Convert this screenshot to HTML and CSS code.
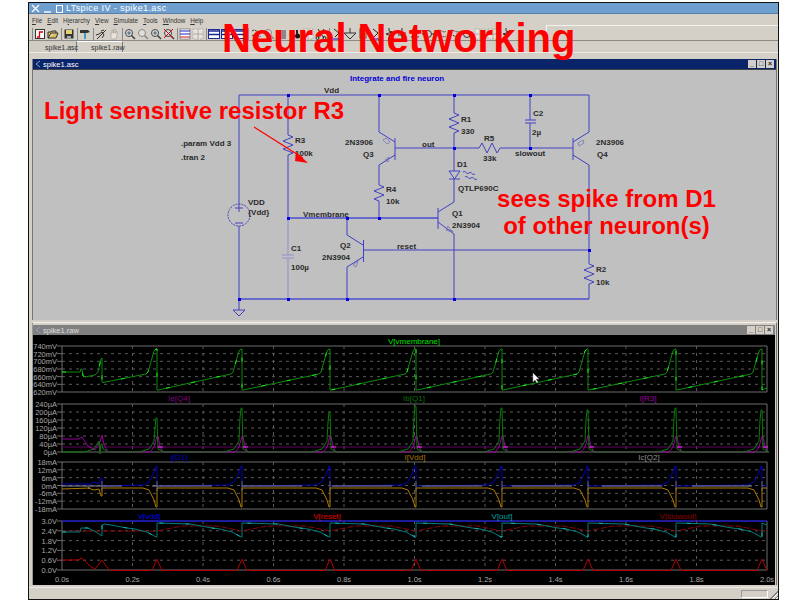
FILE: index.html
```html
<!DOCTYPE html>
<html lang="en">
<head>
    <meta charset="UTF-8">
    <title>LTspice IV - spike1.asc</title>
    <link rel="stylesheet" href="styles.css">
</head>
<body>
    <svg class="sprites" width="0" height="0">
        <symbol id="i-new" viewBox="0 0 12 12"><rect x="1.5" y="1.5" width="9" height="9" fill="#fff" stroke="#333"/><path d="M3 9h2.5V4H9" fill="none" stroke="#e00000" stroke-width="1.3"/></symbol>
        <symbol id="i-open" viewBox="0 0 12 12"><path d="M1 10V4h3l1-1h4v2H4l-3 5h8l2-5H9" fill="#e0c050" stroke="#333"/></symbol>
        <symbol id="i-save" viewBox="0 0 12 12"><rect x="1.5" y="1.5" width="9" height="9" fill="#333"/><rect x="3" y="2" width="6" height="4" fill="#e8d070"/><rect x="4" y="8" width="4" height="2.5" fill="#aaa"/></symbol>
        <symbol id="i-hammer" viewBox="0 0 12 12"><path d="M1 2h8l2 2-3 1H1z" fill="#333"/><path d="M5 5h2v6H5z" fill="#3aa0c0"/></symbol>
        <symbol id="i-run" viewBox="0 0 12 12"><path d="M6 3l3-1M4 6l3-2 2 3-2 3M1 7l3-1M7 6l4-4M2 11l5-5" fill="none" stroke="#333"/></symbol>
        <symbol id="i-halt" viewBox="0 0 12 12"><path d="M3 11V5h1V2h1v3h1V1h1v4h1V3h1v5l-1 3z" fill="#e8e4dc" stroke="#a8a49c" stroke-width=".7"/></symbol>
        <symbol id="i-zoom" viewBox="0 0 12 12"><circle cx="5" cy="5" r="3.5" fill="#cfe0e8" stroke="#444"/><path d="M7.5 7.5l3.5 3.5" stroke="#444" stroke-width="1.6"/><path d="M3 5h4M5 3v4" stroke="#333" stroke-width=".7"/></symbol>
        <symbol id="i-zoomg" viewBox="0 0 12 12"><circle cx="5" cy="5" r="3.5" fill="#e0e0d8" stroke="#888"/><path d="M7.5 7.5l3.5 3.5" stroke="#888" stroke-width="1.6"/></symbol>
        <symbol id="i-zoomx" viewBox="0 0 12 12"><circle cx="5" cy="5" r="3.5" fill="#cfe0e8" stroke="#444"/><path d="M7.5 7.5l3.5 3.5" stroke="#444" stroke-width="1.6"/><path d="M1 1l9 9M10 1l-9 9" stroke="#d00000"/></symbol>
        <symbol id="i-plot" viewBox="0 0 12 12"><rect x="1" y="1" width="10" height="10" fill="#fff" stroke="#555" stroke-width=".6"/><path d="M1 3h10M1 6h10" stroke="#2020c0"/><path d="M1 9h10" stroke="#c02020"/></symbol>
        <symbol id="i-plotg" viewBox="0 0 12 12"><rect x="1" y="1" width="10" height="10" fill="#e8e4dc" stroke="#999" stroke-width=".6" stroke-dasharray="2 1"/><path d="M1 6h10M6 1v10" stroke="#aaa"/></symbol>
        <symbol id="i-win" viewBox="0 0 12 12"><rect x=".5" y="1.5" width="11" height="9" fill="#fff" stroke="#1a2a90"/><path d="M.5 3h11M.5 6.5h11" stroke="#1a2a90" stroke-width="1.3"/></symbol>
        <symbol id="i-cut" viewBox="0 0 12 12"><path d="M3 1l6 9M9 1l-6 9" stroke="#222"/><circle cx="2.5" cy="10" r="1.5" fill="none" stroke="#222"/><circle cx="9.5" cy="10" r="1.5" fill="none" stroke="#222"/></symbol>
        <symbol id="i-gray" viewBox="0 0 12 12"><rect x="2" y="2" width="8" height="9" fill="#888"/></symbol>
        <symbol id="i-bin" viewBox="0 0 12 12"><circle cx="3.5" cy="8" r="2.5" fill="#111"/><circle cx="8.5" cy="8" r="2.5" fill="#111"/><path d="M3 2h2v5H3zM7 2h2v5H7z" fill="#222"/></symbol>
        <symbol id="i-wire" viewBox="0 0 12 12"><path d="M3 1l5 4-4 4" fill="none" stroke="#222"/><path d="M0 11h12" stroke="#1010d0"/></symbol>
        <symbol id="i-gnd" viewBox="0 0 12 12"><path d="M6 0v5M0 5h12L6 11z" fill="none" stroke="#333"/></symbol>
        <symbol id="i-label" viewBox="0 0 12 12"><rect x="3" y="1" width="6" height="9" fill="#d8b840" stroke="#555"/></symbol>
        <symbol id="i-res" viewBox="0 0 12 12"><path d="M6 0v3l3 1-6 2 6 2-3 1v3" fill="none" stroke="#333"/></symbol>
        <symbol id="i-cap" viewBox="0 0 12 12"><path d="M6 0v5M2 5h8M2 7h8M6 7v5" fill="none" stroke="#333"/></symbol>
        <symbol id="i-dio" viewBox="0 0 12 12"><path d="M2 3h8L6 9zM2 9h8M6 0v12" fill="none" stroke="#333"/></symbol>
        <symbol id="i-text" viewBox="0 0 12 12"><circle cx="6" cy="6" r="3.5" fill="none" stroke="#333"/><path d="M0 6h2M10 6h2" stroke="#333"/></symbol>
        <symbol id="i-move" viewBox="0 0 12 12"><path d="M2 3c3-3 6 3 9 0M2 8c3-3 6 3 9 0" fill="none" stroke="#333" stroke-dasharray="2 1"/></symbol>
        <symbol id="i-doc" viewBox="0 0 8 8"><path d="M6 1L2 4l4 3" fill="none" stroke="#8a9ac8"/></symbol>
    </svg>

    <div class="app">
        <div class="titlebar">
            <div class="wm-buttons">
                <svg width="9" height="9" viewBox="0 0 9 9"><path d="M1 1l7 7M8 1L1 8" stroke="#fff" stroke-width="1.2"/></svg>
                <svg width="9" height="9" viewBox="0 0 9 9"><path d="M1 8h7" stroke="#fff" stroke-width="1.4"/></svg>
                <svg width="9" height="9" viewBox="0 0 9 9"><rect x="1.5" y="1.5" width="6" height="7" fill="none" stroke="#fff"/></svg>
            </div>
            <span class="app-title">LTspice IV - spike1.asc</span>
        </div>

        <div class="menubar">
            <span><u>F</u>ile</span>
            <span><u>E</u>dit</span>
            <span>H<u>i</u>erarchy</span>
            <span><u>V</u>iew</span>
            <span><u>S</u>imulate</span>
            <span><u>T</u>ools</span>
            <span><u>W</u>indow</span>
            <span><u>H</u>elp</span>
        </div>

        <div class="toolbar">
            <i class="sep"></i>
            <svg class="tb-icon"><use href="#i-new"/></svg>
            <svg class="tb-icon"><use href="#i-open"/></svg>
            <i class="sep"></i>
            <svg class="tb-icon"><use href="#i-save"/></svg>
            <i class="sep"></i>
            <svg class="tb-icon"><use href="#i-hammer"/></svg>
            <i class="sep"></i>
            <svg class="tb-icon"><use href="#i-run"/></svg>
            <svg class="tb-icon"><use href="#i-halt"/></svg>
            <i class="sep"></i>
            <svg class="tb-icon"><use href="#i-zoom"/></svg>
            <svg class="tb-icon"><use href="#i-zoomg"/></svg>
            <svg class="tb-icon"><use href="#i-zoom"/></svg>
            <svg class="tb-icon"><use href="#i-zoomx"/></svg>
            <i class="sep"></i>
            <svg class="tb-icon"><use href="#i-plot"/></svg>
            <svg class="tb-icon"><use href="#i-plotg"/></svg>
            <i class="sep"></i>
            <svg class="tb-icon"><use href="#i-win"/></svg>
            <svg class="tb-icon"><use href="#i-win"/></svg>
            <svg class="tb-icon"><use href="#i-win"/></svg>
            <i class="sep"></i>
            <svg class="tb-icon"><use href="#i-move"/></svg>
            <svg class="tb-icon"><use href="#i-zoomg"/></svg>
            <svg class="tb-icon"><use href="#i-gray"/></svg>
            <svg class="tb-icon"><use href="#i-bin"/></svg>
            <svg class="tb-icon"><use href="#i-plotg"/></svg>
            <svg class="tb-icon"><use href="#i-cut"/></svg>
            <i class="sep"></i>
            <svg class="tb-icon"><use href="#i-wire"/></svg>
            <svg class="tb-icon"><use href="#i-gnd"/></svg>
            <svg class="tb-icon"><use href="#i-label"/></svg>
            <svg class="tb-icon"><use href="#i-wire"/></svg>
            <svg class="tb-icon"><use href="#i-res"/></svg>
            <svg class="tb-icon"><use href="#i-cap"/></svg>
            <svg class="tb-icon"><use href="#i-dio"/></svg>
            <svg class="tb-icon"><use href="#i-text"/></svg>
            <svg class="tb-icon"><use href="#i-move"/></svg>
            <svg class="tb-icon"><use href="#i-move"/></svg>
            <svg class="tb-icon"><use href="#i-text"/></svg>
            <svg class="tb-icon"><use href="#i-plotg"/></svg>
            <svg class="tb-icon"><use href="#i-plotg"/></svg>
            <svg class="tb-icon"><use href="#i-res"/></svg>
            <i class="tb-rest"></i>
        </div>

        <div class="tabs">
            <span class="tab tab-active">spike1.asc</span>
            <span class="tab">spike1.raw</span>
        </div>

        <div class="mdi">
            <div class="child">
                <div class="child-title active">
                    <svg class="child-icon"><use href="#i-doc"/></svg>
                    <span class="child-name">spike1.asc</span>
                    <div class="child-buttons"><b>_</b><b>□</b><b>×</b></div>
                </div>
                <!-- viewBox uses screen coordinates so the wires are easy to read off -->
                <svg class="schematic" viewBox="33 70 743 250">
                    <g class="wire">
                        <path d="M239 95H589M239 95V204M239 226V310M233 310H245L239 316Z"/>
                        <path d="M288 95V135l5 2-10 4 10 4-10 4 10 4-5 2V218"/>
                        <path class="pale" d="M288 218V255M282 255H294M282 258H294M288 258V299"/>
                        <path d="M379 95V132L395 142M395 138V160M395 155L379 165V185l5 2-10 4 10 4-10 4 5 2V218"/>
                        <path d="M395 148H479l3-5 5 10 5-10 5 10 3-5H573M573 138V160"/>
                        <path d="M454 95V113l5 2-10 4 10 4-10 4 10 4-5 2V171M449 171H460L454.5 179ZM449 179H460M454 179V202L438 212M438 208V229M438 222L454 234V299"/>
                        <path d="M530 95V120M525 120H536M525 123H536M530 123V148"/>
                        <path d="M589 95V132L573 142M573 155L589 165V264l5 2-10 4 10 4-10 4 10 4-5 2V299"/>
                        <path d="M347 218V235L363 245M363.5 240V262M363 257L347 267V299M363 250H589"/>
                        <path d="M463 172c3-2 3 3 6 1s3 3 6 1M465 177c3-2 3 3 6 1s3 3 6 1"/>
                        <path class="thin" d="M390 142l-4-4-3 2 4 4zM389 157l-4 3 3 2zM448 226l4 6-6-2zM358 261l-5 4 3 2zM578 143l5-3 1 3-5 3zM449 230l4 1-1 2z"/>
                        <path class="heavy" d="M288 218H438M239 299H589"/>
                        <circle class="source" cx="239" cy="215" r="11"/>
                        <path d="M235 208h8M239 204v8M235 223h8"/>
                    </g>
                    <g class="dots">
                        <rect x="287" y="94" width="3" height="3"/><rect x="378" y="94" width="3" height="3"/>
                        <rect x="453" y="94" width="3" height="3"/><rect x="529" y="94" width="3" height="3"/>
                        <rect x="287" y="217" width="3" height="3"/><rect x="346" y="217" width="3" height="3"/>
                        <rect x="378" y="217" width="3" height="3"/><rect x="453" y="147" width="3" height="3"/>
                        <rect x="529" y="147" width="3" height="3"/><rect x="588" y="249" width="3" height="3"/>
                        <rect x="238" y="298" width="3" height="3"/>
                        <rect x="287" y="298" width="3" height="3"/><rect x="346" y="298" width="3" height="3"/>
                        <rect x="453" y="298" width="3" height="3"/>
                    </g>
                    <text class="heading" x="350" y="81">Integrate and fire neuron</text>
                    <g class="label">
                        <text x="324" y="93">Vdd</text>
                        <text x="181" y="146">.param Vdd 3</text>
                        <text x="181" y="160">.tran 2</text>
                        <text x="295" y="143">R3</text>
                        <text x="295" y="156">100k</text>
                        <text x="345" y="145">2N3906</text>
                        <text x="363" y="157">Q3</text>
                        <text x="386" y="192">R4</text>
                        <text x="386" y="204">10k</text>
                        <text x="248" y="205">VDD</text>
                        <text x="248" y="215">{Vdd}</text>
                        <text x="303" y="217">Vmembrane</text>
                        <text x="291" y="251">C1</text>
                        <text x="291" y="270">100µ</text>
                        <text x="340" y="248">Q2</text>
                        <text x="322" y="260">2N3904</text>
                        <text x="397" y="249">reset</text>
                        <text x="422" y="147">out</text>
                        <text x="461" y="122">R1</text>
                        <text x="461" y="134">330</text>
                        <text x="484" y="141">R5</text>
                        <text x="483" y="161">33k</text>
                        <text x="457" y="167">D1</text>
                        <text x="458" y="191">QTLP690C</text>
                        <text x="452" y="216">Q1</text>
                        <text x="452" y="228">2N3904</text>
                        <text x="533" y="116">C2</text>
                        <text x="532" y="135">2µ</text>
                        <text x="515" y="156">slowout</text>
                        <text x="596" y="145">2N3906</text>
                        <text x="597" y="157">Q4</text>
                        <text x="596" y="272">R2</text>
                        <text x="596" y="285">10k</text>
                    </g>
                    <path class="pointer" d="M254 127L303 158"/>
                    <path class="pointer-head" d="M296 152L308 163L295 161Z"/>
                </svg>
            </div>

            <div class="child child-wave">
                <div class="child-title">
                    <svg class="child-icon"><use href="#i-doc"/></svg>
                    <span class="child-name">spike1.raw</span>
                    <div class="child-buttons"><b>_</b><b>□</b><b>×</b></div>
                </div>
                <svg id="chart" class="chart" viewBox="33 335 742 250"></svg>
            </div>
        </div>

        <div class="statusbar">
            <span class="status-panel"></span>
            <span class="grip"></span>
        </div>
    </div>

    <div class="note note-title">Neural Networking</div>
    <div class="note note-r3">Light sensitive resistor R3</div>
    <div class="note note-spike">sees spike from D1<br>of other neuron(s)</div>

    <script src="chart.js"></script>
</body>
</html>
```

FILE: styles.css
```css
/* styles.css */

* {
    box-sizing: border-box;
}

body {
    margin: 0;
    height: 600px;
    overflow: hidden;
    background-color: #fff;
    font-family: "Liberation Sans", Arial, sans-serif;
}

.sprites {
    display: block;
    height: 0;
}

.app {
    display: flex;
    flex-direction: column;
    width: 751px;
    height: 598px;
    margin: 2px 0 0 28px;
    border: 1px solid #111;
    background-color: #d4d0c8;
}

.titlebar {
    flex: none;
    display: flex;
    align-items: center;
    height: 11px;
    padding-left: 2px;
    background-color: #6f9fcf;
    border-bottom: 1px solid #5a80a8;
    color: #fff;
}

.wm-buttons {
    display: flex;
    gap: 3px;
    margin-right: 2px;
}

.app-title {
    font-size: 9px;
    letter-spacing: 0.4px;
    line-height: 10px;
}

.menubar {
    flex: none;
    display: flex;
    align-items: center;
    gap: 5px;
    height: 11px;
    padding: 1px 0 0 3px;
    font-size: 6.3px;
    color: #333;
}

.toolbar {
    flex: none;
    display: flex;
    align-items: center;
    gap: 1px;
    height: 16px;
    padding: 2px 0 0 2px;
    border-bottom: 1px solid #8a8a86;
}

.tb-icon {
    flex: none;
    width: 12px;
    height: 12px;
}

.sep {
    flex: none;
    width: 1px;
    height: 12px;
    margin-left: 1px;
    background-color: #888;
}

.tb-rest {
    align-self: stretch;
    width: 232px;
    margin: -2px 0 0 auto;
    border-top: 1px solid #f4f2ee;
    border-left: 1px solid #f4f2ee;
}

.tabs {
    flex: none;
    display: flex;
    height: 12px;
    padding-left: 1px;
    border-bottom: 1px solid #eeeae4;
    font-size: 7px;
    color: #333;
}

.tab {
    display: flex;
    align-items: center;
    width: 46px;
    padding-left: 14px;
    border-top: 1px solid #fff;
    border-right: 1px solid #777;
}

.tab-active {
    width: 47px;
    padding-left: 15px;
    border-top-color: transparent;
    background-color: #d0ccc4;
}

.mdi {
    flex: none;
    display: flex;
    flex-direction: column;
    height: 535px;
    padding: 6px 1px 2px 3px;
    border-bottom: 1px solid #eeeae4;
}

.child {
    flex: none;
    display: flex;
    flex-direction: column;
    height: 261px;
    border-left: 1px solid #777;
    border-right: 1px solid #777;
}

.child-wave {
    height: 263px;
    margin-top: 2px;
    padding: 2px 1px 0 0;
    border-top: 1px solid #f4f2ee;
    border-left: 1px solid #999;
}

.child-title {
    flex: none;
    display: flex;
    align-items: center;
    height: 10px;
    padding: 0 2px 0 1px;
    background-color: #808080;
    color: #ddd;
    font-size: 7.5px;
}

.child-title.active {
    height: 11px;
    background-color: #0a246a;
    color: #fff;
    border-bottom: 1px solid #444;
}

.child-icon {
    flex: none;
    width: 8px;
    height: 8px;
    margin-right: 1px;
}

.child-name {
    flex: 1;
    line-height: 9px;
}

.child-buttons {
    display: flex;
    gap: 1px;
}

.child-buttons b {
    display: flex;
    justify-content: center;
    align-items: center;
    width: 8px;
    height: 8px;
    background-color: #d4d0c8;
    color: #222;
    font-size: 7px;
    line-height: 8px;
    font-weight: bold;
}

.schematic {
    display: block;
    flex: none;
    width: 743px;
    height: 250px;
    background-color: #c0c0c0;
}

.chart {
    display: block;
    flex: none;
    width: 742px;
    height: 250px;
    background-color: #000;
}

.statusbar {
    flex: none;
    display: flex;
    justify-content: flex-end;
    align-items: center;
    height: 11px;
}

.status-panel {
    width: 27px;
    height: 8px;
    margin-right: 1px;
    border: 1px solid #9a9a96;
    border-right-color: #fff;
    border-bottom-color: #fff;
}

.grip {
    align-self: flex-end;
    width: 9px;
    height: 9px;
    background: repeating-linear-gradient(135deg, #d4d0c8 0 1px, #808080 1px 2px, #fff 2px 3px);
    clip-path: polygon(100% 0, 100% 100%, 0 100%);
}

/* schematic */

.wire path,
.wire circle {
    fill: none;
    stroke: #4040c4;
    stroke-width: 1;
}

.wire .pale {
    stroke: #8c90c8;
}

.wire .thin {
    stroke: #6a6ab4;
    stroke-width: 0.7;
}

.wire .heavy {
    stroke: #1414d8;
    stroke-width: 1.2;
}

.wire .source {
    stroke-dasharray: 2 1;
}

.dots rect {
    fill: #0000e0;
}

.heading {
    fill: #0000d8;
    font-size: 8px;
    font-weight: bold;
}

.label text {
    fill: #2a2a2a;
    font-size: 8px;
    font-weight: bold;
}

.pointer {
    fill: none;
    stroke: #ff0000;
    stroke-width: 1.2;
}

.pointer-head {
    fill: #ff0000;
}

/* waveform plots */

.frame {
    stroke: #6c6c6c;
    stroke-width: 1;
}

.grid {
    stroke: #5a5a5a;
    stroke-width: 1;
    stroke-dasharray: 3 4;
}

.axis-text {
    fill: #a8a8a8;
    font-size: 7.5px;
}

.trace-name {
    font-size: 8px;
    text-anchor: middle;
}

.trace {
    fill: none;
    stroke-width: 1;
}

.cursor {
    fill: #fff;
    stroke: #888;
    stroke-width: 0.5;
}

/* red text laid over the screenshot */

.note {
    position: absolute;
    color: #ff0000;
    font-weight: bold;
    white-space: nowrap;
}

.note-title {
    left: 222px;
    top: 15px;
    font-size: 40px;
    line-height: 46px;
}

.note-r3 {
    left: 44px;
    top: 97px;
    font-size: 24px;
    line-height: 28px;
}

.note-spike {
    left: 497px;
    top: 185px;
    width: 219px;
    font-size: 24px;
    line-height: 27px;
    text-align: center;
}
```

FILE: chart.js
```js
// chart.js - draws the four LTspice plots into #chart

const svg = document.getElementById("chart");
const NS = "http://www.w3.org/2000/svg";

const LEFT = 62;
const RIGHT = 767;

// Where each neuron spike fires, in screen x
const spikes = [102, 157, 242, 330, 416, 502, 588, 676, 762];

const plots = [
    { top: 346, bottom: 392, ticks: ["740mV", "720mV", "700mV", "680mV", "660mV", "640mV", "620mV"] },
    { top: 404, bottom: 452, ticks: ["240µA", "200µA", "160µA", "120µA", "80µA", "40µA", "0µA"] },
    { top: 462, bottom: 509, ticks: ["18mA", "12mA", "6mA", "0mA", "-6mA", "-12mA", "-18mA"] },
    { top: 521, bottom: 570, ticks: ["3.0V", "2.4V", "1.8V", "1.2V", "0.6V", "0.0V"] }
];

const names = [
    { text: "V[vmembrane]", x: 414, y: 344, color: "#00e000" },
    { text: "Ie[Q4]", x: 179, y: 401, color: "#800080" },
    { text: "Ib[Q1]", x: 414, y: 401, color: "#087008" },
    { text: "I[R3]", x: 648, y: 401, color: "#a000a0" },
    { text: "I[D1]", x: 179, y: 460, color: "#0000c8" },
    { text: "I[Vdd]", x: 415, y: 460, color: "#a87800" },
    { text: "Ic[Q2]", x: 649, y: 460, color: "#909090" },
    { text: "V[vdd]", x: 149, y: 519, color: "#0000ff" },
    { text: "V[reset]", x: 327, y: 519, color: "#e00000" },
    { text: "V[out]", x: 502, y: 519, color: "#00a0a0" },
    { text: "V[slowout]", x: 678, y: 519, color: "#900000" }
];

function add(tag, attrs, text) {
    const el = document.createElementNS(NS, tag);
    for (const key in attrs) el.setAttribute(key, attrs[key]);
    if (text) el.textContent = text;
    svg.appendChild(el);
    return el;
}

function line(x1, y1, x2, y2, cls) {
    return add("line", { x1, y1, x2, y2, class: cls });
}

function trace(points, color, extra) {
    add("polyline", Object.assign({
        class: "trace",
        points: points.map(p => p.join(",")).join(" "),
        stroke: color
    }, extra));
}

function drawGrid() {
    plots.forEach(plot => {
        const step = (plot.bottom - plot.top) / (plot.ticks.length - 1);
        plot.ticks.forEach((label, i) => {
            const y = plot.top + i * step;
            if (i > 0 && i < plot.ticks.length - 1) line(LEFT, y, RIGHT, y, "grid");
            line(LEFT - 5, y, LEFT, y, "frame");
            add("text", { class: "axis-text", x: 57, y: y + 3, "text-anchor": "end" }, label);
        });
        line(LEFT, plot.top, RIGHT, plot.top, "frame");
        line(LEFT, plot.bottom, RIGHT, plot.bottom, "frame");
        line(LEFT, plot.top, LEFT, plot.bottom, "frame");
        line(RIGHT, plot.top, RIGHT, plot.bottom, "frame");
        for (let i = 1; i < 10; i++) {
            const x = LEFT + i * 70.5;
            line(x, plot.top, x, plot.bottom, "grid");
        }
    });
    for (let i = 0; i <= 10; i++) {
        const x = LEFT + i * 70.5;
        add("text", { class: "axis-text", x, y: 582, "text-anchor": "middle" }, (i * 0.2).toFixed(1) + "s");
    }
}

// The scaled-down screenshot shows traces dim with bright stretches
function glowing(points, dim, bright) {
    trace(points, dim);
    trace(points, bright, { "stroke-dasharray": "4 22" });
}

function drawMembrane() {
    const pts = [[LEFT, 372], [80, 372], [81, 369], [82, 369], [83, 376], [85, 377], [95, 375], [98, 372], [101, 359], [102, 358], [102, 382]];
    spikes.slice(1).forEach((t, i) => {
        pts.push([spikes[i] + 1, i === 0 ? 382.5 : 390], [t - 11, 374], [t - 9, 372], [t - 3, 351], [t - 1, 349], [t, 349], [t, 390]);
    });
    pts.push([RIGHT, 388]);
    glowing(pts, "#0a8c0a", "#18f018");
}

function drawCurrents() {
    const peaks = [444, 418, 408, 412, 406, 408, 410, 408, 410];
    trace([[LEFT, 447], [RIGHT, 447]], "#600060");

    const ie = [[LEFT, 439], [78, 439], [82, 437], [88, 446], [95, 450], [100, 442], [102, 435], [104, 445], [108, 452]];
    spikes.slice(1).forEach(t => {
        ie.push([t - 7, 452], [t - 3, 447], [t, 436], [t + 1, 436], [t + 3, 447], [t + 6, 452]);
    });
    ie.push([RIGHT, 452]);
    trace(ie, "#9a009a");

    const ib = [[LEFT, 452]];
    spikes.forEach((t, i) => {
        ib.push([t - 18, 452], [t - 8, 449], [t - 3, 441], [t - 2, peaks[i] + 10], [t - 1, peaks[i]], [t, peaks[i]], [t + 1, 449], [t + 7, 452]);
    });
    ib.push([RIGHT, 452]);
    trace(ib, "#0c7a0c");

    spikes.slice(1).forEach(t => {
        line(t + 1, 447, t + 6, 447, "spike-mark").setAttribute("stroke", "#ff30ff");
    });
}

function drawSupply() {
    const blue = [[LEFT, 484], [90, 484]];
    const orange = [[LEFT, 489], [90, 488]];
    spikes.forEach((t, i) => {
        const up = i === 0 ? 478 : 466;
        const down = i === 0 ? 496 : 507;
        blue.push([t - 14, 485], [t - 8, 482], [t - 3, up + 6], [t - 1, up], [t, up], [t, 486]);
        orange.push([t - 14, 488], [t - 8, 490], [t - 3, down - 7], [t - 1, down], [t, down], [t, 488]);
    });
    blue.push([RIGHT, 486]);
    orange.push([RIGHT, 488]);
    trace(orange, "#b07c00");
    trace(blue, "#0000b8");
    trace([[LEFT, 486], [RIGHT, 486]], "#8a8aa0", { "stroke-dasharray": "60 30" });
    spikes.forEach(t => line(t, 481, t, 491, "frame"));
}

function drawVoltages() {
    trace([[LEFT, 521], [RIGHT, 521]], "#0000ff", { "stroke-width": 2 });

    const slow = [[LEFT, 531]];
    spikes.forEach((t, i) => {
        const prev = i === 0 ? LEFT : spikes[i - 1];
        if (i > 1) slow.push([prev + 25, 526], [t - 25, 526]);
        slow.push([t, 531]);
    });
    slow.push([RIGHT, 530]);
    trace(slow, "#8a0008", { "stroke-dasharray": "6 2" });

    const out = [[LEFT, 532], [80, 532], [81, 528], [88, 528], [96, 532], [102, 536], [102, 525]];
    spikes.slice(1).forEach(t => {
        out.push([t - 52, 524], [t - 30, 528], [t - 22, 529], [t - 10, 532], [t - 1, 537], [t, 537], [t, 523]);
    });
    out.push([RIGHT, 525]);
    glowing(out, "#007c7c", "#10b0b0");

    const reset = [[LEFT, 560], [78, 560], [82, 558], [90, 566], [95, 569], [98, 565], [102, 560], [106, 566], [110, 570.5]];
    spikes.slice(1).forEach(t => {
        reset.push([t - 5, 570.5], [t, 559], [t + 5, 570.5]);
    });
    reset.push([RIGHT, 570.5]);
    trace(reset, "#b00000");
}

function drawNames() {
    names.forEach(n => {
        add("text", { class: "trace-name", x: n.x, y: n.y, fill: n.color }, n.text);
    });
}

drawGrid();
drawMembrane();
drawCurrents();
drawSupply();
drawVoltages();
drawNames();

// mouse pointer left over the plot
add("path", { class: "cursor", d: "M533 373v9l2-2 2 3 1-1-2-3h3z" });
```
